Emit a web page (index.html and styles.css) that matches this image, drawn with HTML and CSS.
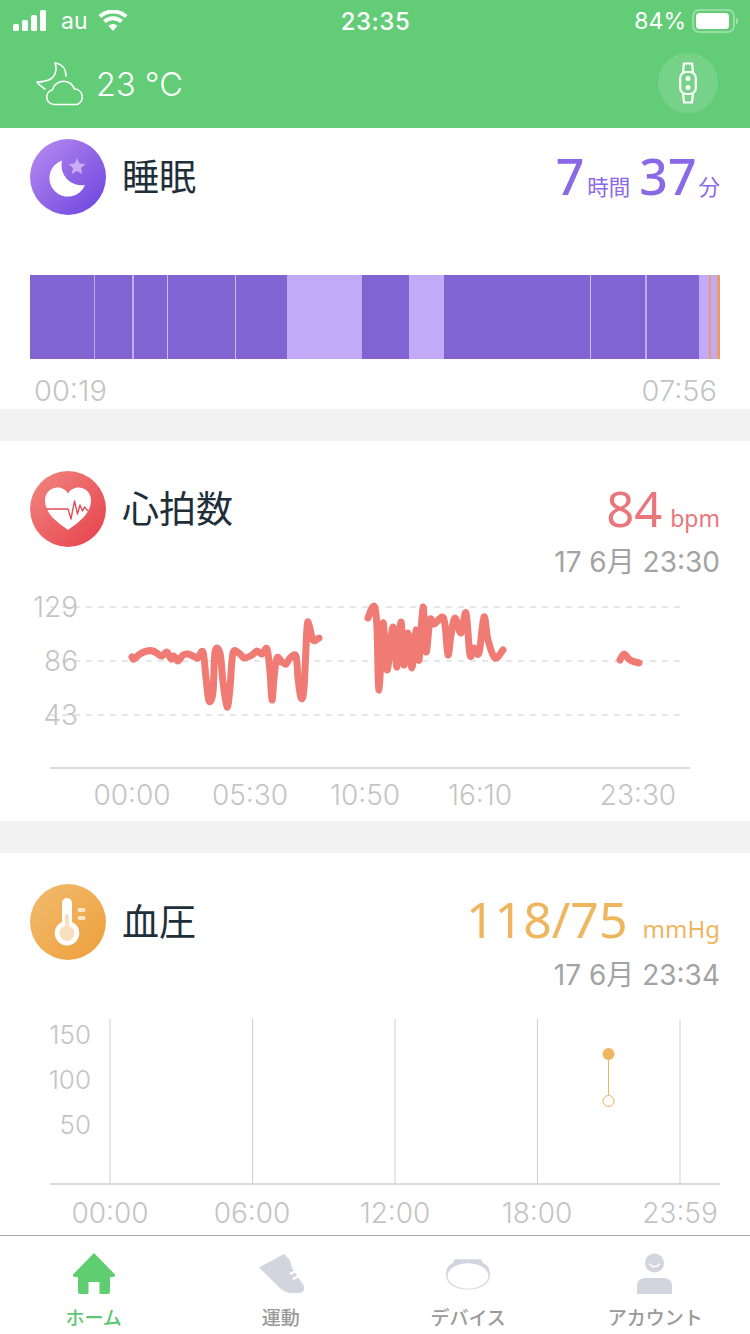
FILE: index.html
```html
<!DOCTYPE html>
<html>
<head>
  <meta charset="UTF-8">
  <title>ホーム</title>
  <link rel="stylesheet" href="styles.css">
</head>
<body>
  <header class="top">
    <div class="status">
      <div class="status-left">
        <svg class="signal" width="34" height="22" viewBox="0 0 34 22"><rect x="0" y="14" width="6" height="7" rx="1.5"/><rect x="9" y="10" width="6" height="11" rx="1.5"/><rect x="18" y="5" width="6" height="16" rx="1.5"/><rect x="27" y="0" width="6" height="21" rx="1.5"/></svg>
        <span class="carrier">au</span>
        <svg class="wifi" width="30" height="22" viewBox="0 0 30 22"><path d="M15 21l-4.600-5.200a7 7 0 0 1 9.200 0z"/><path d="M7.800 13l-2.800-3a15 15 0 0 1 20 0l-2.800 3a11 11 0 0 0-14.400 0z"/><path d="M3.200 8l-2.700-3a22 22 0 0 1 29 0l-2.700 3a18 18 0 0 0-23.600 0z"/></svg>
      </div>
      <div class="status-time">23:35</div>
      <div class="status-right">
        <span>84%</span>
        <svg width="46" height="24" viewBox="0 0 46 24"><rect x="1" y="1" width="41" height="22" rx="6" fill="none" stroke="#fff" stroke-opacity=".45" stroke-width="1.5"/><rect x="4" y="4" width="33" height="16" rx="3.5" fill="#fff"/><path d="M44 8.500a4 4 0 0 1 0 7z" fill="#fff" fill-opacity=".45"/></svg>
      </div>
    </div>
    <div class="bar">
      <div class="weather">
        <svg width="50" height="44" viewBox="0 0 50 44" fill="none" stroke="#fff" stroke-width="1.6" stroke-linejoin="round" stroke-linecap="round"><path d="M19 1c7 1 11 6 11 13M19 1c2 6 1 11-3 15-4 3-9 4-15 4 2 3 5 5 8 7"/><path d="M18 42.500a7.500 7.500 0 0 1-1.500-14.800A11.500 11.500 0 0 1 38.500 27A8 8 0 0 1 41 42.500Z"/></svg>
        <span>23 °C</span>
      </div>
      <div class="band-btn">
        <svg width="18" height="42" viewBox="0 0 18 42" fill="none" stroke="#fff" stroke-width="2.2" stroke-linejoin="round"><path d="M4 10l1-8.500h8l1 8.500M4 32l1 8.500h8l1-8.500"/><rect x="1.200" y="10" width="15.600" height="22" rx="6"/><circle cx="9" cy="16.500" r="2.500" fill="#fff" stroke="none"/><circle cx="9" cy="25.500" r="2.500" fill="#fff" stroke="none"/></svg>
      </div>
    </div>
  </header>

  <main class="list">
    <section class="card card-sleep">
      <div class="head">
        <svg class="head-icon" width="76" height="76" viewBox="0 0 76 76">
          <defs><linearGradient id="gs" x1="0" y1="0" x2="1" y2="1"><stop offset="0" stop-color="#b98df2"/><stop offset="1" stop-color="#6a42dc"/></linearGradient></defs>
          <circle cx="38" cy="38" r="38" fill="url(#gs)"/>
          <path d="M32 21.500A18.500 18.500 0 1 0 55 46A20 20 0 0 1 32 21.500Z" fill="#fff"/>
          <path d="M47 19l2.500 5.400 5.900.7-4.400 4 1.200 5.800-5.200-2.900-5.200 2.900 1.200-5.800-4.400-4 5.900-.7z" fill="#c8aef5"/>
        </svg>
        <h2 class="title">睡眠</h2>
        <div class="value sleep-value"><b>7</b><small>時間</small><b class="next">37</b><small class="last">分</small></div>
      </div>
      <div class="sleep-bar">
        <i class="deep" style="width:63.5px"></i><i class="tick"></i>
        <i class="deep" style="width:36.5px"></i><i class="tick wide"></i>
        <i class="deep" style="width:33px"></i><i class="tick thin"></i>
        <i class="deep" style="width:67px"></i><i class="tick thin"></i>
        <i class="deep" style="width:51.5px"></i>
        <i class="light" style="width:75px"></i>
        <i class="deep" style="width:47px"></i>
        <i class="light" style="width:35px"></i>
        <i class="deep" style="width:145.5px"></i><i class="tick thin"></i>
        <i class="deep" style="width:54.5px"></i><i class="tick"></i>
        <i class="deep" style="width:52.5px"></i>
        <i class="light" style="width:10px"></i>
        <i class="awake" style="width:1.5px"></i>
        <i class="light" style="width:6.5px"></i>
        <i class="awake" style="width:3px"></i>
      </div>
      <div class="sleep-times"><span>00:19</span><span>07:56</span></div>
    </section>

    <section class="card card-heart">
      <div class="head">
        <svg class="head-icon" width="76" height="76" viewBox="0 0 76 76">
          <defs><linearGradient id="gh" x1="0" y1="0" x2="1" y2="1"><stop offset="0" stop-color="#f18880"/><stop offset="1" stop-color="#e63f4c"/></linearGradient></defs>
          <circle cx="38" cy="38" r="38" fill="url(#gh)"/>
          <path d="M38 59C27 51 15 43 15 29C15 21.500 21 16.500 27.500 16.500C32 16.500 36 19 38 22.500C40 19 44 16.500 48.500 16.500C55 16.500 61 21.500 61 29C61 43 49 51 38 59Z" fill="#fff"/>
          <path d="M16 38H38L41 48L44.500 30L47.500 43L50 34L52.500 40L54.500 36L58 40" fill="none" stroke="#dc4e58" stroke-width="1.4" stroke-linejoin="round"/>
        </svg>
        <h2 class="title">心拍数</h2>
        <div class="value-col">
          <div class="value heart-value"><b>84</b><small>bpm</small></div>
          <div class="stamp">17 6月 23:30</div>
        </div>
      </div>
      <svg class="chart" width="750" height="231" viewBox="0 590 750 231">
        <g class="grid-dash">
          <line x1="50" y1="607" x2="680" y2="607"/>
          <line x1="50" y1="661" x2="680" y2="661"/>
          <line x1="50" y1="715" x2="680" y2="715"/>
        </g>
        <g class="axis-y">
          <text x="78" y="617">129</text>
          <text x="78" y="671">86</text>
          <text x="78" y="725">43</text>
        </g>
        <g class="heart-line" id="heart-line"></g>
        <line class="axis" x1="50" y1="768" x2="690" y2="768"/>
        <g class="axis-x">
          <text x="132" y="805">00:00</text>
          <text x="250" y="805">05:30</text>
          <text x="365" y="805">10:50</text>
          <text x="480" y="805">16:10</text>
          <text x="638" y="805">23:30</text>
        </g>
      </svg>
    </section>

    <section class="card card-bp">
      <div class="head">
        <svg class="head-icon" width="76" height="76" viewBox="0 0 76 76">
          <defs><linearGradient id="gb" x1="0" y1="0" x2="1" y2="1"><stop offset="0" stop-color="#f1bc6e"/><stop offset="1" stop-color="#ee9f3c"/></linearGradient></defs>
          <circle cx="38" cy="38" r="38" fill="url(#gb)"/>
          <path d="M32 19a5 5 0 0 1 10 0v19a12.300 12.300 0 1 1-10 0z" fill="#fff"/>
          <path d="M35 32a2 2 0 0 1 4 0v10a7.500 7.500 0 1 1-4 0z" fill="#f8dfbd"/>
          <rect x="47.5" y="24" width="8" height="4" rx="2" fill="#fbe6c8"/>
          <rect x="47.5" y="32" width="8" height="4" rx="2" fill="#fbe6c8"/>
        </svg>
        <h2 class="title">血圧</h2>
        <div class="value-col">
          <div class="value bp-value"><b>118/75</b><small>mmHg</small></div>
          <div class="stamp">17 6月 23:34</div>
        </div>
      </div>
      <svg class="chart chart-bp" width="750" height="235" viewBox="0 1000 750 235">
        <g class="grid-solid">
          <line x1="110" y1="1019" x2="110" y2="1184"/>
          <line x1="252.5" y1="1019" x2="252.5" y2="1184"/>
          <line x1="395" y1="1019" x2="395" y2="1184"/>
          <line x1="537.5" y1="1019" x2="537.5" y2="1184"/>
          <line x1="680" y1="1019" x2="680" y2="1184"/>
        </g>
        <g class="axis-y">
          <text x="91" y="1044">150</text>
          <text x="91" y="1089">100</text>
          <text x="91" y="1134">50</text>
        </g>
        <line class="axis" x1="50" y1="1184" x2="720" y2="1184"/>
        <line class="bp-link" x1="608.5" y1="1054" x2="608.5" y2="1101"/>
        <circle class="bp-high" cx="608.5" cy="1054" r="6"/>
        <circle class="bp-low" cx="608.5" cy="1101" r="5.5"/>
        <g class="axis-x">
          <text x="110" y="1223">00:00</text>
          <text x="252" y="1223">06:00</text>
          <text x="395" y="1223">12:00</text>
          <text x="537" y="1223">18:00</text>
          <text x="680" y="1223">23:59</text>
        </g>
      </svg>
    </section>
  </main>

  <nav class="tabs">
    <a class="tab active">
      <svg width="44" height="42" viewBox="0 0 44 42"><path d="M22 0L43 21.500Q43.500 24 41 24H38V39Q38 41 36 41H27.500V29H16.500V41H8Q6 41 6 39V24H3Q.5 24 1 21.500Z" fill="#5fce70"/></svg>
      <span>ホーム</span>
    </a>
    <a class="tab">
      <svg class="shoe" width="46" height="42" viewBox="0 0 46 42"><path d="M0 14.500L25 1L31 7L33 15L45 33Q46 39 41 40H32Q26 39.500 22 36Z" fill="#d2d5dd"/><path d="M31 21l6-3M34 26l6-3" stroke="#fff" stroke-width="2.5"/></svg>
      <span>運動</span>
    </a>
    <a class="tab">
      <svg width="46" height="42" viewBox="0 0 46 42"><path d="M9 6.500H36L38 10C43 12 45 16 45 22C45 31 35.500 36.500 23 36.500C10.500 36.500 1 31 1 22C1 16 3 12 8 10Z" fill="#d2d5dd"/><ellipse cx="23" cy="23" rx="20.500" ry="12.700" fill="#fff"/><rect x="10" y="6.500" width="26" height="3.500" rx="1" fill="#d2d5dd"/></svg>
      <span>デバイス</span>
    </a>
    <a class="tab">
      <svg width="36" height="42" viewBox="0 0 36 42"><circle cx="17.500" cy="10" r="9.500" fill="#d2d5dd"/><path d="M12.500 10.500a5.500 5.500 0 0 0 10 0" fill="none" stroke="#fff" stroke-width="1.5"/><path d="M0 41V33C0 27 4 25 9 25H26C31 25 35 27 35 33V41Z" fill="#d2d5dd"/></svg>
      <span>アカウント</span>
    </a>
  </nav>
  <script src="chart.js"></script>
</body>
</html>
```

FILE: styles.css
```css
* { box-sizing: border-box; }
html, body { margin: 0; padding: 0; }
body {
  width: 750px;
  height: 1334px;
  overflow: hidden;
  display: flex;
  flex-direction: column;
  background: #f2f2f2;
  color: #1f2f3a;
  font-family: "Inter", "Noto Sans CJK JP", sans-serif;
}

/* top green area */
.top { height: 128px; background: #62cc77; color: #fff; }
.status {
  height: 40px;
  padding: 2px 12px 0 13px;
  display: grid;
  grid-template-columns: 1fr auto 1fr;
  align-items: center;
  font-size: 23px;
}
.status-left { display: flex; align-items: center; }
.signal { fill: #fff; }
.carrier { margin-left: 14px; }
.wifi { fill: #fff; margin-left: 10px; }
.status-time { font-size: 24px; font-weight: 500; letter-spacing: .5px; }
.status-right { display: flex; align-items: center; justify-content: flex-end; gap: 6px; }

.bar {
  height: 88px;
  padding: 0 32px 2px 36px;
  display: flex;
  align-items: center;
  justify-content: space-between;
}
.weather { display: flex; align-items: center; gap: 10px; margin-top: 2px; font-size: 32.5px; font-weight: 300; }
.band-btn {
  width: 60px;
  height: 60px;
  border-radius: 50%;
  background: rgba(255,255,255,.13);
  display: flex;
  align-items: center;
  justify-content: center;
}

/* cards */
.list { flex: 1; display: flex; flex-direction: column; gap: 32px; }
.card { background: #fff; }
.card-sleep { height: 281px; padding: 11px 30px 0; }
.card-heart { height: 380px; padding-top: 30px; }
.card-bp { height: 382px; padding-top: 31px; }

.head { display: flex; align-items: flex-start; padding: 0 30px; }
.card-sleep .head { padding: 0; height: 76px; }
.card-heart .head { height: 119px; }
.card-bp .head { height: 116px; }
.head-icon { flex: none; }
.title {
  margin: 0 0 0 16px;
  font-size: 37px;
  font-weight: 400;
  line-height: 78px;
}
.value-col { margin-left: auto; text-align: right; }
.value {
  margin-left: auto;
  height: 76px;
  display: flex;
  align-items: baseline;
  justify-content: flex-end;
  white-space: nowrap;
  font-family: "Noto Sans", "Noto Sans CJK JP", sans-serif;
  line-height: 72px;
}
.value b { font-weight: 400; }
.value small { font-size: 21.5px; }
.sleep-value { color: #8a68e6; line-height: 74px; }
.sleep-value b { font-size: 50px; font-weight: 500; }
.sleep-value small { margin-left: 3px; }
.sleep-value .next { margin-left: 9px; }
.sleep-value .last { margin-left: 2px; }
.heart-value { color: #e9767a; line-height: 74px; }
.heart-value b { font-size: 49px; }
.heart-value small { margin-left: 8px; font-size: 23px; }
.bp-value { color: #efb660; line-height: 70px; }
.bp-value b { font-size: 50px; }
.bp-value small { margin-left: 15px; font-size: 24px; }
.stamp { margin-top: -3px; font-size: 28px; line-height: 36px; color: #a3a3a3; }

/* sleep bar */
.sleep-bar { display: flex; height: 84px; margin-top: 60px; }
.sleep-bar i { display: block; flex: none; }
.deep { background: #8065d2; }
.light { background: #c2aaf9; }
.awake { background: #ee9b5f; }
.tick { width: 1.5px; background: #c2aaf9; }
.tick.wide { width: 2px; }
.tick.thin { width: 1px; background: #cbbcf0; }
.sleep-times {
  display: flex;
  justify-content: space-between;
  padding: 15px 3px 0 4px;
  font-size: 29px;
  line-height: 34px;
  font-weight: 300;
  color: #c4c4c4;
}

/* charts */
.chart { display: block; }
.chart text { font-family: "Inter", sans-serif; font-size: 28px; fill: #c4c4c4; text-anchor: middle; font-weight: 300; }
.chart .axis-y text { text-anchor: end; }
.chart-bp .axis-y text { font-size: 26px; }
.grid-dash line { stroke: #cfcfcf; stroke-width: 1; stroke-dasharray: 6 6; }
.grid-solid line { stroke: #cfcfcf; stroke-width: 1; }
.axis { stroke: #cfcfcf; stroke-width: 1.5; }
.heart-line path {
  fill: none;
  stroke: #f07a74;
  stroke-width: 7;
  stroke-linecap: round;
  stroke-linejoin: round;
}
.bp-link { stroke: #efb660; stroke-width: 1; }
.bp-high { fill: #efb660; }
.bp-low { fill: #fff; stroke: #efb660; stroke-width: 1; }

/* bottom tabs */
.tabs {
  height: 99px;
  flex: none;
  padding-right: 1px;
  background: #fff;
  border-top: 1px solid #a9a9a9;
  display: grid;
  grid-template-columns: repeat(4, 1fr);
}
.tab {
  display: flex;
  flex-direction: column;
  align-items: center;
  padding-top: 17px;
  font-size: 19px;
  font-weight: 500;
  color: #9a9a9a;
}
.tab svg { flex: none; }
.tab .shoe { margin-left: 3px; }
.tab span { margin-top: 12px; line-height: 24px; }
.tab.active { color: #5fc672; }
```

FILE: chart.js
```js
// heart rate readings in chart coordinates, one array per unbroken run
var runs = [
  [132,657, 134,659, 140,654, 147,651, 153,651, 158,654, 162,656, 167,652, 171,659, 174,656, 178,661, 183,655, 188,654, 195,657, 198,658, 203,652, 206,678, 209,701, 213,692, 215,652, 220,653, 223,682, 227,707, 230,688, 233,653, 240,654, 244,658, 252,655, 257,651, 262,654, 267,649, 270,672, 272,700, 274,678, 277,658, 282,662, 286,664, 290,658, 296,656, 298,678, 301,698, 304,688, 307,628, 309,625, 313,640, 319,638],
  [368,618, 372,608, 375,608, 377,628, 379,690, 383,623, 387,670, 393,627, 397,667, 401,622, 404,665, 408,633, 412,668, 416,630, 419,660, 423,607, 426,652, 430,620, 434,624, 442,617, 445,625, 448,655, 451,635, 455,618, 461,633, 466,613, 470,655, 474,648, 479,653, 484,617, 488,640, 495,658, 503,650],
  [620,660, 624,654, 630,660, 639,663]
]

function smooth(p) {
  var d = 'M' + p[0] + ' ' + p[1]
  var n = p.length / 2
  for (var i = 0; i < n - 1; i++) {
    var a = Math.max(i - 1, 0) * 2
    var b = i * 2
    var c = (i + 1) * 2
    var e = Math.min(i + 2, n - 1) * 2
    d += 'C' + (p[b] + (p[c] - p[a]) / 6) + ' ' + (p[b + 1] + (p[c + 1] - p[a + 1]) / 6) + ' ' +
      (p[c] - (p[e] - p[b]) / 6) + ' ' + (p[c + 1] - (p[e + 1] - p[b + 1]) / 6) + ' ' +
      p[c] + ' ' + p[c + 1]
  }
  return d
}

var g = document.getElementById('heart-line')
runs.forEach(function (r) {
  var path = document.createElementNS('http://www.w3.org/2000/svg', 'path')
  path.setAttribute('d', smooth(r))
  g.appendChild(path)
})
```
